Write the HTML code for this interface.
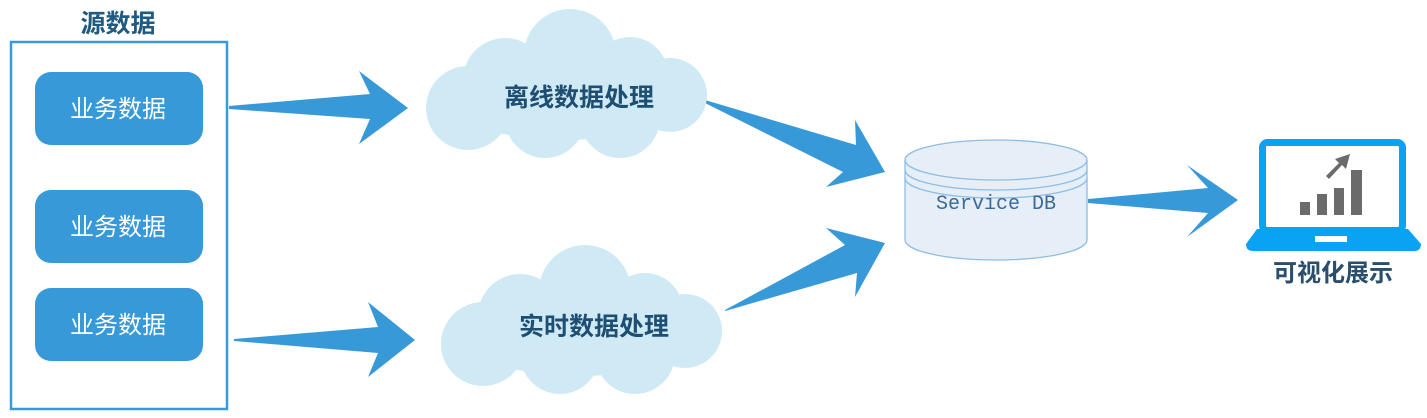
<!DOCTYPE html>
<html><head><meta charset="utf-8"><style>
html,body{margin:0;padding:0;background:#fff;}
svg{display:block;}
text{font-family:"Liberation Sans","Noto Sans CJK SC",sans-serif;}
</style></head><body>
<svg width="1427" height="418" viewBox="0 0 1427 418" xmlns="http://www.w3.org/2000/svg">
<text x="118" y="32" text-anchor="middle" font-size="25" font-weight="bold" fill="#215a80">源数据</text>
<rect x="11" y="42" width="216" height="367" fill="#fff" stroke="#3a9ad9" stroke-width="2.5"/>
<g fill="#3899d9">
<rect x="35" y="72" width="168" height="73" rx="16"/>
<rect x="35" y="190" width="168" height="73" rx="16"/>
<rect x="35" y="288" width="168" height="73" rx="16"/>
</g>
<g fill="#fff" font-size="24" text-anchor="middle">
<text x="118" y="117">业务数据</text>
<text x="118" y="235">业务数据</text>
<text x="118" y="333">业务数据</text>
</g>
<g fill="#3899d9">
<polygon points="229,106 370,94 359,71 408,108 359,144 370,119 229,109"/>
<polygon points="234,339 378,327 368,302 415,340 368,377 378,353 234,341"/>
<polygon points="705,100 856,145 855,120 885,172 826,187 843,172 705,103"/>
<polygon points="725,310 845,245 826,228 885,243 855,297 857,273 725,311"/>
<polygon points="1088,199 1208,188 1187,165 1238,200 1187,237 1208,213 1088,203"/>
</g>
<g fill="#d0eaf5">
<g>
<circle cx="570" cy="55" r="46"/>
<circle cx="505" cy="80" r="42"/>
<circle cx="468" cy="108" r="42"/>
<circle cx="545" cy="118" r="40"/>
<circle cx="620" cy="118" r="40"/>
<circle cx="670" cy="95" r="37"/>
<circle cx="630" cy="75" r="38"/>
<ellipse cx="565" cy="105" rx="110" ry="35"/>
</g>
<g transform="translate(15,236)">
<circle cx="570" cy="55" r="46"/>
<circle cx="505" cy="80" r="42"/>
<circle cx="468" cy="108" r="42"/>
<circle cx="545" cy="118" r="40"/>
<circle cx="620" cy="118" r="40"/>
<circle cx="670" cy="95" r="37"/>
<circle cx="630" cy="75" r="38"/>
<ellipse cx="565" cy="105" rx="110" ry="35"/>
</g>
</g>
<g fill="#1e4e72" font-size="25" font-weight="bold" text-anchor="middle">
<text x="579" y="106">离线数据处理</text>
<text x="594" y="335">实时数据处理</text>
</g>
<g stroke="#8fbde3" stroke-width="1.3" fill="#e6eef8">
<path d="M905,160 L905,240 A91,20 0 0 0 1087,240 L1087,160"/>
<ellipse cx="996" cy="160" rx="91" ry="20"/>
<path d="M905,170 A91,20 0 0 0 1087,170" fill="none"/>
<path d="M905,178 A91,20 0 0 0 1087,178" fill="none"/>
</g>
<text x="996" y="209" text-anchor="middle" font-size="20" fill="#3a6a9a" style="font-family:'Liberation Mono',monospace">Service DB</text>
<g>
<rect x="1262.5" y="142.5" width="140" height="88" rx="5" fill="#fff" stroke="#0aa2f2" stroke-width="7"/>
<path d="M1257,229 L1408,229 L1421,244 Q1421,251 1414,251 L1253,251 Q1246,251 1246,244 Z" fill="#0aa2f2"/>
<rect x="1315" y="236" width="32" height="6" fill="#fff"/>
<g fill="#6b6b6b">
<rect x="1300" y="202" width="10" height="13"/>
<rect x="1317" y="194" width="10" height="21"/>
<rect x="1334" y="188" width="10" height="27"/>
<rect x="1351" y="170" width="11" height="45"/>
<path d="M1326,176 L1339,163 L1335,159 L1350,154 L1346,169 L1342,165 L1329,179 Z"/>
</g>
</g>
<text x="1333" y="281" text-anchor="middle" font-size="24" font-weight="bold" fill="#2a4e6e">可视化展示</text>
</svg>
</body></html>
